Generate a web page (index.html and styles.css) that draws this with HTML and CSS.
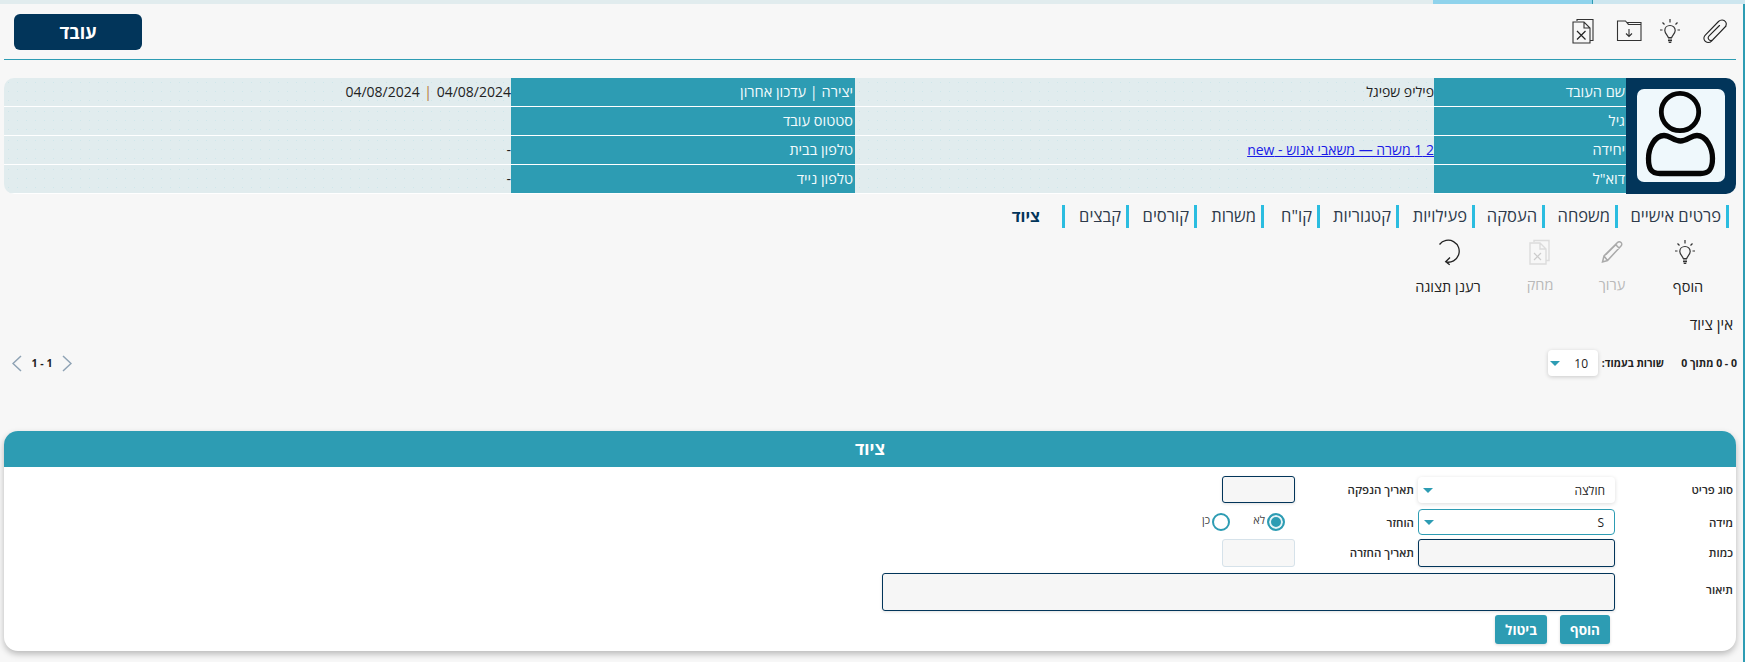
FILE: index.html
```html
<!DOCTYPE html>
<html lang="he" dir="rtl">
<head>
<meta charset="utf-8">
<title>ציוד עובד</title>
<link rel="stylesheet" href="styles.css">
</head>
<body>
<div class="topstrip"><span class="ts-a"></span><span class="ts-b"></span><span class="ts-c"></span></div>
<main class="page">
  <header class="toolbar">
    <div class="toolicons">
      <svg class="ticon clip" viewBox="0 0 26 26"><path d="M6 24.500c-2.500 0-4.500-2.500-4-5 .2-1 .7-1.700 1.300-2.300L16.500 3.500c2-2 5.500-2 7 .2 1.200 1.800.8 4-.7 5.600L11 21.500c-1.200 1.300-3.200 1.300-4.200 0-.9-1.100-.7-2.600.3-3.700L17.500 7.500M6 24.500c1.500 0 2.800-.6 3.800-1.700L24 8" fill="none" stroke="#222" stroke-width="1.100" stroke-linecap="round"/></svg>
      <svg class="ticon bulb" viewBox="0 0 26 26"><path d="M13 1v3.500M5.500 4.500l2 2M20.500 4.500l-2 2M3 12h2.500M20.500 12H23M13 7.500c-3 0-5.200 2.200-5.200 4.900 0 2.800 3 5 3.500 7.100h3.400c.5-2.100 3.500-4.300 3.500-7.100 0-2.700-2.200-4.900-5.200-4.900ZM11 21h4M11 22.700h4M11.700 24.300h2.600" fill="none" stroke="#333" stroke-width="1.200"/></svg>
      <svg class="ticon folder" viewBox="0 0 26 24"><path d="M1.500 2h8l3 3.500h12.500v16H1.500ZM12 5.500V3.500h13v2M13 10v7M10 14.500l3 3 3-3" fill="none" stroke="#333" stroke-width="1.100"/></svg>
      <svg class="ticon xls" viewBox="0 0 24 26"><path d="M6 3V1.500h16v21h-3M2 4h11l6 6v15H2ZM13 4v6h6" fill="none" stroke="#333" stroke-width="1.100"/><path d="M6 13l8.500 8.500M14.500 13 6 21.500" fill="none" stroke="#222" stroke-width="1.200"/></svg>
    </div>
    <button class="worker-btn" type="button">עובד</button>
  </header>

  <section class="profile">
    <div class="avatar">
      <div class="avatar-box">
        <svg viewBox="0 0 88 93" class="avatar-svg"><circle cx="43" cy="23" r="18.700" fill="none" stroke="#050505" stroke-width="4.800"/><path d="M27 46.500c6 0 10 5.500 16.500 5.500s10.500-5.500 16.500-5.500c9 0 15.500 12 15.500 23 0 10-3 15-12 15H23c-9 0-11.500-5-11.500-15 0-11 6.500-23 15.500-23Z" fill="none" stroke="#050505" stroke-width="5.300"/></svg>
      </div>
    </div>
    <div class="ptable">
      <div class="plabel first">שם העובד</div><div class="pval">פיליפ שפיגל</div><div class="plabel">יצירה | עדכון אחרון</div><div class="pval">04/08/2024 <span class="pipe">|</span> 04/08/2024</div>
      <div class="plabel first">גיל</div><div class="pval"></div><div class="plabel">סטטוס עובד</div><div class="pval"></div>
      <div class="plabel first">יחידה</div><div class="pval"><a class="unit" href="#">2 1 משרה — משאבי אנוש - new</a></div><div class="plabel">טלפון בבית</div><div class="pval">-</div>
      <div class="plabel first">דוא"ל</div><div class="pval"></div><div class="plabel">טלפון נייד</div><div class="pval">-</div>
    </div>
  </section>

  <nav class="tabs">
    <a class="tab w1">פרטים אישיים</a><a class="tab w2">משפחה</a><a class="tab w3">העסקה</a><a class="tab w4">פעילויות</a><a class="tab w5">קטגוריות</a><a class="tab w6">קו"ח</a><a class="tab w7">משרות</a><a class="tab w8">קורסים</a><a class="tab w9">קבצים</a><a class="tab active">ציוד</a>
  </nav>

  <div class="actions">
    <div class="action a-add">
      <svg class="aicon" viewBox="0 0 26 26"><path d="M13 1v3.500M5.500 4.500l2 2M20.500 4.500l-2 2M3 12h2.500M20.500 12H23M13 7.500c-3 0-5.200 2.200-5.200 4.900 0 2.800 3 5 3.500 7.100h3.400c.5-2.100 3.500-4.300 3.500-7.100 0-2.700-2.200-4.900-5.200-4.900ZM11 21h4M11 22.700h4M11.700 24.300h2.600" fill="none" stroke="#333" stroke-width="1.200"/></svg>
      <span>הוסף</span>
    </div>
    <div class="action a-edit off">
      <svg class="aicon" viewBox="0 0 26 26"><path d="M3.500 23 5 17 18.500 3.500c1-1 2.500-1 3.500 0s1 2.500 0 3.500L8.500 21.500ZM5 17l3.500 4.500M16.500 5.500l4 4M7 15.500l11-11" fill="none" stroke="#aaa" stroke-width="1.500"/></svg>
      <span>ערוך</span>
    </div>
    <div class="action a-del off">
      <svg class="aicon" viewBox="0 0 26 26"><path d="M7 3V1.500h15v20h-3M3 4h10l6 6v15H3ZM13 4v6h6" fill="none" stroke="#dcdcdc" stroke-width="1.400"/><path d="M7 14l7 7M14 14l-7 7" fill="none" stroke="#ccc" stroke-width="1.200"/></svg>
      <span>מחק</span>
    </div>
    <div class="action a-ref">
      <svg class="aicon" viewBox="0 0 26 26"><path d="M4.500 5.500A11 11 0 1 1 11 23M15 18.500l-4.300 4.300 4 3" fill="none" stroke="#222" stroke-width="1.300"/></svg>
      <span>רענן תצוגה</span>
    </div>
  </div>

  <p class="empty">אין ציוד</p>

  <div class="pager">
    <div class="pager-info">
      <span class="pager-count">0 - 0 מתוך 0</span>
      <span class="pager-rows">שורות בעמוד:</span>
      <div class="pager-select"><span>10</span><i class="caret"></i></div>
    </div>
    <div class="pager-nav">
      <svg class="chev" viewBox="0 0 10 17"><path d="M1 1l8 7.500L1 16" fill="none" stroke="#8ea2b4" stroke-width="1.500"/></svg>
      <span class="pager-range">1 - 1</span>
      <svg class="chev" viewBox="0 0 10 17"><path d="M9 1 1 8.500 9 16" fill="none" stroke="#8ea2b4" stroke-width="1.500"/></svg>
    </div>
  </div>

  <section class="panel">
    <h2 class="panel-head">ציוד</h2>
    <div class="form">
      <label class="flabel">סוג פריט</label>
      <div class="select"><span>חולצה</span><i class="caret"></i></div>
      <label class="flabel second">תאריך הנפקה</label>
      <div class="input short"></div>

      <label class="flabel">מידה</label>
      <div class="select focused"><span>S</span><i class="caret"></i></div>
      <label class="flabel second">הוחזר</label>
      <div class="radios">
        <span class="radio on"><i></i>לא</span>
        <span class="radio"><i></i>כן</span>
      </div>

      <label class="flabel">כמות</label>
      <div class="input tall"></div>
      <label class="flabel second">תאריך החזרה</label>
      <div class="input short tall disabled"></div>

      <label class="flabel top">תיאור</label>
      <div class="input area"></div>

      <div class="buttons">
        <button class="fbtn" type="button">הוסף</button>
        <button class="fbtn wide" type="button">ביטול</button>
      </div>
    </div>
  </section>
</main>
</body>
</html>
```

FILE: styles.css
```css
* { box-sizing: border-box; }
html, body { margin: 0; height: 100%; overflow: hidden; }
body {
  background: #f7f7f7;
  font-family: "Open Sans", "Liberation Sans", sans-serif;
  color: #222;
}
.topstrip { display: flex; height: 4px; direction: ltr; }
.ts-a { width: 1433px; background: #e1ecee; }
.ts-b { width: 160px; background: #8fd3ec; border-right: 1px solid #2d9cb3; }
.ts-c { flex: 1; background: #cde6ef; }

.page {
  width: 1745px;
  height: 658px;
  padding: 0 9px 0 4px;
  background: linear-gradient(to left, #2d9cb3 2px, transparent 2px);
}

.toolbar {
  display: flex;
  justify-content: space-between;
  align-items: flex-start;
  height: 56px;
  border-bottom: 1px solid #2d9cb3;
  padding: 10px 0 0 10px;
}
.toolicons { display: flex; align-items: center; margin-right: 8px; height: 34px; }
.ticon { display: block; flex: none; }
.clip { width: 26px; height: 26px; margin-left: 19px; }
.bulb { width: 26px; height: 26px; margin-left: 15px; }
.folder { width: 26px; height: 24px; margin-left: 21px; }
.xls { width: 24px; height: 26px; }
.worker-btn {
  width: 128px;
  height: 36px;
  background: #02355a;
  color: #fff;
  border: 0;
  border-radius: 6px;
  font: 700 18px "Open Sans", sans-serif;
}

.profile {
  display: flex;
  margin-top: 18px;
  height: 116px;
  border-radius: 10px;
  overflow: hidden;
}
.avatar {
  width: 110px;
  flex: none;
  background: #02355a;
  padding: 11px 11px 12px 11px;
}
.avatar-box { height: 93px; background: #eff8fc; border-radius: 7px; }
.avatar-svg { display: block; width: 100%; height: 100%; }
.ptable {
  flex: 1;
  display: grid;
  grid-template-columns: 192px 579px 344px 1fr;
  grid-auto-rows: 29px;
}
.plabel, .pval {
  height: 29px;
  border-bottom: 1px solid #fff;
  line-height: 27px;
  white-space: nowrap;
}
.plabel { background: #2d9cb3; color: #f2fbfd; font-size: 14.5px; padding-right: 2px; }
.plabel.first { padding-right: 1px; }
.pval {
  font-size: 14px;
  color: #222;
  background-color: #e1ecee;
  background-image: radial-gradient(circle, #cfe6ea 0.6px, transparent 0.9px);
  background-size: 9px 9px;
}
.unit { color: #1a1ae6; text-decoration: underline; }
.pipe { color: #b5763a; padding: 0 1px; }

.tabs { display: flex; margin: 11px 7px 0 0; height: 23px; }
.tab {
  display: block;
  flex: none;
  border-right: 3px solid #2bbde0;
  height: 23px;
  line-height: 22px;
  font-size: 16.5px;
  color: #2e3a4a;
  padding-right: 5px;
  white-space: nowrap;
}
.w1 { width: 111px; }
.w2 { width: 73px; }
.w3 { width: 70px; }
.w4 { width: 76px; }
.w5 { width: 79px; }
.w6 { width: 56px; }
.w7 { width: 67px; }
.w8 { width: 68px; }
.w9 { width: 64px; }
.tab.active { font-weight: 700; color: #02355a; font-size: 16px; padding-right: 22px; }

.actions { display: flex; margin-top: 11px; height: 64px; }
.action {
  display: flex;
  flex-direction: column;
  align-items: center;
  flex: none;
  font-size: 14.5px;
  color: #222;
  white-space: nowrap;
}
.action span { margin-top: 12px; line-height: 20px; }
.action.off span { margin-top: 10px; }
.aicon { display: block; width: 26px; height: 26px; overflow: visible; }
.a-add .aicon { margin-right: 6px; }
.action.off { color: #b9b9b9; }
.a-add { width: 60px; margin-right: 18px; }
.a-edit { width: 60px; margin-right: 16px; }
.a-del { width: 60px; margin-right: 12px; }
.a-ref { width: 80px; margin-right: 22px; }

.empty { margin: 11px 3px 0 0; font-size: 15px; line-height: 20px; }

.pager {
  display: flex;
  justify-content: space-between;
  align-items: center;
  margin-top: 16px;
  height: 26px;
}
.pager-info { display: flex; align-items: center; }
.pager-count { font-size: 10.5px; font-weight: 700; margin-right: -1px; width: 73px; white-space: nowrap; }
.pager-rows { font-size: 10.5px; font-weight: 700; width: 66px; white-space: nowrap; }
.pager-select {
  width: 50px;
  height: 26px;
  background: #fff;
  border-radius: 4px;
  box-shadow: 0 1px 4px rgba(0,0,0,.18);
  display: flex;
  justify-content: space-between;
  align-items: center;
  padding: 0 10px 0 2px;
  font-size: 12px;
}
.caret {
  display: block;
  width: 0;
  height: 0;
  border-left: 5px solid transparent;
  border-right: 5px solid transparent;
  border-top: 5px solid #2d9cb3;
}
.pager-nav { display: flex; align-items: center; margin-left: 8px; }
.chev { width: 10px; height: 17px; display: block; }
.pager-range { font-size: 10.5px; font-weight: 700; width: 40px; text-align: center; direction: ltr; }

.panel {
  margin-top: 55px;
  height: 220px;
  background: #fff;
  border-radius: 14px;
  box-shadow: 0 3px 6px rgba(0,0,0,.25);
  overflow: hidden;
}
.panel-head {
  margin: 0;
  height: 36px;
  background: #2d9cb3;
  color: #fff;
  font-size: 17px;
  font-weight: 700;
  line-height: 36px;
  text-align: center;
}
.form {
  display: grid;
  grid-template-columns: 121px 197px 123px 73px 340px 1fr;
  grid-template-rows: 33px 30px 34px 42px 29px;
  padding-top: 9px;
  align-items: start;
}
.flabel {
  grid-column: 1;
  font-size: 11.5px;
  font-weight: 600;
  line-height: 27px;
  color: #2b2b2b;
  padding-right: 3px;
  white-space: nowrap;
}
.flabel.second { grid-column: 3; padding-right: 4px; }
.flabel.top { padding-top: 3px; }
.select {
  height: 26px;
  margin-top: 1px;
  background: #fff;
  border-radius: 4px;
  box-shadow: 0 1px 4px rgba(0,0,0,.14);
  display: flex;
  justify-content: space-between;
  align-items: center;
  padding: 0 10px 0 5px;
  font-size: 12px;
}
.select.focused { margin-top: 0; border: 1px solid #2d9cb3; box-shadow: none; }
.input {
  height: 27px;
  background: #f6f6f6;
  border: 1px solid #02355a;
  border-radius: 3px;
  box-shadow: 0 1px 3px rgba(0,0,0,.12);
}
.input.tall { height: 28px; }
.input.disabled { border-color: #d6e2ea; background: #f7f7f7; box-shadow: none; }
.input.area { grid-column: 2 / span 4; height: 38px; }
.radios {
  display: flex;
  grid-column: 4 / span 2;
  align-items: center;
  height: 26px;
  padding-right: 10px;
  font-size: 11px;
  color: #444;
}
.radio { display: flex; align-items: flex-start; width: 55px; line-height: 14px; flex: none; }
.radio i {
  display: block;
  width: 18px;
  height: 18px;
  border: 2px solid #2d9cb3;
  border-radius: 50%;
  background: #fff;
  margin-left: 2px;
}
.radio.on i { background: #2d9cb3; box-shadow: inset 0 0 0 2px #e6f4f7; }
.buttons { grid-column: 2 / span 4; grid-row: 5; display: flex; gap: 13px; padding-right: 5px; }
.fbtn {
  width: 50px;
  height: 29px;
  background: #2d9cb3;
  color: #fff;
  border: 0;
  border-radius: 3px;
  font: 700 13.5px "Open Sans", sans-serif;
  padding: 0;
  box-shadow: 0 1px 3px rgba(0,0,0,.15);
}
.fbtn.wide { width: 52px; }
```
